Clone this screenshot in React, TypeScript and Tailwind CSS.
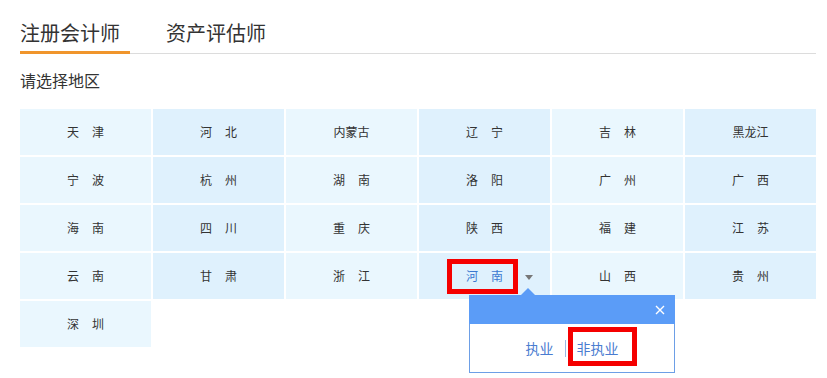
import React from "react";

const rows: string[][] = [
  ["天津", "河北", "内蒙古", "辽宁", "吉林", "黑龙江"],
  ["宁波", "杭州", "湖南", "洛阳", "广州", "广西"],
  ["海南", "四川", "重庆", "陕西", "福建", "江苏"],
  ["云南", "甘肃", "浙江", "河南", "山西", "贵州"],
  ["深圳"],
];

function Name({ n, active }: { n: string; active?: boolean }) {
  const color = active ? "text-[#3b78d0]" : "text-[#333]";
  if (n.length === 2) {
    return (
      <span className={`${color} text-[12px] leading-[16px]`}>
        {n[0]}
        <span className="ml-[13px]">{n[1]}</span>
      </span>
    );
  }
  return <span className={`${color} text-[12px] leading-[16px]`}>{n}</span>;
}

export default function App() {
  return (
    <div
      className="w-[827px] h-[378px] bg-white overflow-hidden px-[20px]"
      style={{ fontFamily: '"Noto Sans CJK SC", "Noto Sans", sans-serif' }}
    >
      <div className="flex items-end pt-[18px] border-b border-[#dcdcdc] w-[796px]">
        <div className="w-[110px] -mb-px pb-[3px] border-b-[3px] border-[#f0952c] text-[20px] leading-[30px] text-[#333]">
          注册会计师
        </div>
        <div className="ml-[36px] -mb-px pb-[3px] border-b-[3px] border-transparent text-[20px] leading-[30px] text-[#333]">
          资产评估师
        </div>
      </div>
      <div className="mt-[16px] mb-[19px] text-[16px] leading-[20px] text-[#333]">请选择地区</div>
      <div className="grid grid-cols-[repeat(6,131px)] auto-rows-[46px] gap-[2px]">
        {rows.map((r, ri) =>
          r.map((n, ci) => {
            const bg = ci % 2 === 0 ? "bg-[#eaf7fe]" : "bg-[#dff1fd]";
            const active = ri === 3 && ci === 3;
            return (
              <div key={ri + "-" + ci} className={`${bg} relative flex items-center justify-center`}>
                <Name n={n} active={active} />
                {active && (
                  <>
                    <div className="absolute left-[28px] top-[6px] w-[71px] h-[35px] border-[5px] border-[#f50000]" />
                    <div className="absolute left-[106px] top-[22px] w-0 h-0 border-l-[4px] border-r-[4px] border-t-[5px] border-l-transparent border-r-transparent border-t-[#777]" />
                    <div className="absolute left-[50px] top-[42px] w-[206px] z-10">
                      <div className="absolute left-[52px] top-[-7px] w-0 h-0 border-l-[7px] border-r-[7px] border-b-[7px] border-l-transparent border-r-transparent border-b-[#5b9cf7]" />
                      <div className="h-[29px] bg-[#5b9cf7] flex items-center justify-end pr-[10px]">
                        <svg width="10" height="10" viewBox="0 0 10 10">
                          <path d="M1 1 L9 9 M9 1 L1 9" stroke="#fff" strokeWidth="1.4" />
                        </svg>
                      </div>
                      <div className="relative h-[49px] bg-white border-x border-b border-[#6d9fe6] flex items-center justify-center text-[14px] leading-[20px] text-[#4a7cd0]">
                        <span>执业</span>
                        <span className="mx-[11px] w-px h-[17px] bg-[#9bb8e4]" />
                        <span>非执业</span>
                        <div className="absolute left-[98px] top-[3px] w-[69px] h-[39px] border-[5px] border-[#f50000]" />
                      </div>
                    </div>
                  </>
                )}
              </div>
            );
          })
        )}
      </div>
    </div>
  );
}
